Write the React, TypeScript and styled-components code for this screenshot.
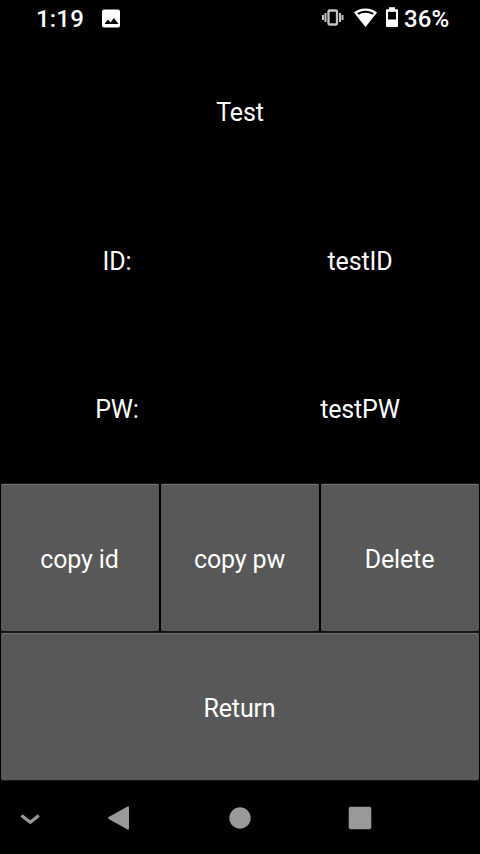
import React from 'react';
import styled, { createGlobalStyle } from 'styled-components';

const GlobalStyle = createGlobalStyle`
  * { box-sizing: border-box; }
  body { margin: 0; background: #000; }
`;
const Screen = styled.main`
  width: 480px;
  height: 854px;
  display: flex;
  flex-direction: column;
  background: #000;
  color: #fff;
  font-family: Roboto, sans-serif;
`;
const StatusBar = styled.header`
  height: 37px;
  flex: none;
  display: flex;
  align-items: center;
  justify-content: space-between;
  padding: 0 30px 0 36px;
  font-size: 24px;
  font-weight: 500;
`;
const StatusGroup = styled.div`
  display: flex;
  align-items: center;
`;
const Clock = styled.span`
  width: 66px;
  letter-spacing: 0.2px;
`;
const Percent = styled.span`
  width: 46px;
  letter-spacing: 0.1px;
`;
const Glyph = styled.svg<{ $gap?: number; $lift?: number }>`
  display: block;
  flex: none;
  margin-right: ${({ $gap = 0 }) => $gap}px;
  margin-bottom: ${({ $lift = 0 }) => $lift}px;
`;
const Content = styled.div`
  height: 744px;
  flex: none;
  display: grid;
  grid-template-rows: repeat(5, 1fr);
  font-size: 25px;
  letter-spacing: -0.15px;
`;
const Row = styled.div<{ $columns: number }>`
  display: grid;
  grid-template-columns: repeat(${({ $columns }) => $columns}, 1fr);
`;
const Label = styled.div`
  display: flex;
  align-items: center;
  justify-content: center;
  padding-top: 2px;
  white-space: pre;
`;
const KeyButton = styled.button`
  margin: 1px;
  padding: 4px 1px 0 0;
  border: 0;
  border-radius: 2px;
  background: #585858;
  box-shadow: inset 0 1px #707070, 0 1px #181818, 0 -1px #181818;
  color: inherit;
  font: inherit;
  letter-spacing: inherit;
`;
const NavBar = styled.nav`
  flex: 1;
  display: grid;
  grid-template-columns: 60px 120px 120px 120px 60px;
  place-items: center;
  padding-top: 1px;
`;
const NavButton = styled.button`
  width: 48px;
  height: 48px;
  display: grid;
  place-items: center;
  padding: 0;
  border: 0;
  background: none;
  color: #999;
`;

export default function App() {
  return (
    <>
      <GlobalStyle />
      <Screen>
        <StatusBar>
          <StatusGroup>
            <Clock>1:19</Clock>
            <Glyph width="19" height="19" viewBox="0 0 19 19">
              <path fill="#fff" fillRule="evenodd" d="M2 .5h14q2 0 2 2v14q0 2-2 2H2q-2 0-2-2v-14q0-2 2-2ZM2.5 15h14L12 9l-3.500 4.500L6 10.500Z" />
            </Glyph>
          </StatusGroup>
          <StatusGroup>
            <Glyph $gap={10} $lift={2} width="22" height="20" viewBox="0 0 22 20" fill="none" stroke="#c4c4c4">
              <rect x="6.500" y="2.500" width="8.500" height="14" rx="1" strokeWidth="2.300" />
              <path strokeWidth="2" d="M3.500 5v9M18 5v9M1 7v5M20.500 7v5" />
            </Glyph>
            <Glyph $gap={9} $lift={1} width="23" height="20" viewBox="0 0 23 20">
              <path fill="#fff" fillRule="evenodd" d="M11.500.5C7.100.5 3 2 0 4.500l11.500 14.500L23 4.500C20 2 15.900.5 11.500.5ZM3.200 5.100C5.600 3.600 8.500 2.700 11.500 2.700s5.900.9 8.300 2.400L18.500 6.700C16.600 5.400 14.100 4.700 11.500 4.700S6.400 5.400 4.500 6.700Z" />
            </Glyph>
            <Glyph $gap={6} $lift={2} width="12" height="21" viewBox="0 0 12 21">
              <path fill="#fff" fillRule="evenodd" d="M3 .2h6V2.300h2q1 0 1 1v15.700q0 1-1 1H1q-1 0-1-1V3.300q0-1 1-1h2ZM2 4.700v7.800h8V4.700Z" />
            </Glyph>
            <Percent>36%</Percent>
          </StatusGroup>
        </StatusBar>
        <Content>
          <Row $columns={1}><Label>Test</Label></Row>
          <Row $columns={2}><Label>{'ID: '}</Label><Label>testID</Label></Row>
          <Row $columns={2}><Label>{'PW: '}</Label><Label>testPW</Label></Row>
          <Row $columns={3}>
            <KeyButton>copy id</KeyButton>
            <KeyButton>copy pw</KeyButton>
            <KeyButton>Delete</KeyButton>
          </Row>
          <Row $columns={1}><KeyButton>Return</KeyButton></Row>
        </Content>
        <NavBar>
          <NavButton aria-label="Hide keyboard">
            <svg width="24" height="24" viewBox="0 0 24 24">
              <path d="m3.500 9.500 8.800 6.800 8.500-6.800" fill="none" stroke="currentColor" strokeWidth="3.200" />
            </svg>
          </NavButton>
          <NavButton aria-label="Back">
            <svg width="24" height="24" viewBox="0 0 24 24">
              <path d="M19.500.500q1.500-1 1.500 1v21q0 2-1.500 1L.700 13q-1.200-1 0-2Z" fill="currentColor" />
            </svg>
          </NavButton>
          <NavButton aria-label="Home">
            <svg width="24" height="24" viewBox="0 0 24 24"><circle cx="12" cy="12" r="10.700" fill="currentColor" /></svg>
          </NavButton>
          <NavButton aria-label="Overview">
            <svg width="24" height="24" viewBox="0 0 24 24"><rect x=".7" y=".700" width="22.600" height="22.600" rx="2" fill="currentColor" /></svg>
          </NavButton>
        </NavBar>
      </Screen>
    </>
  );
}
